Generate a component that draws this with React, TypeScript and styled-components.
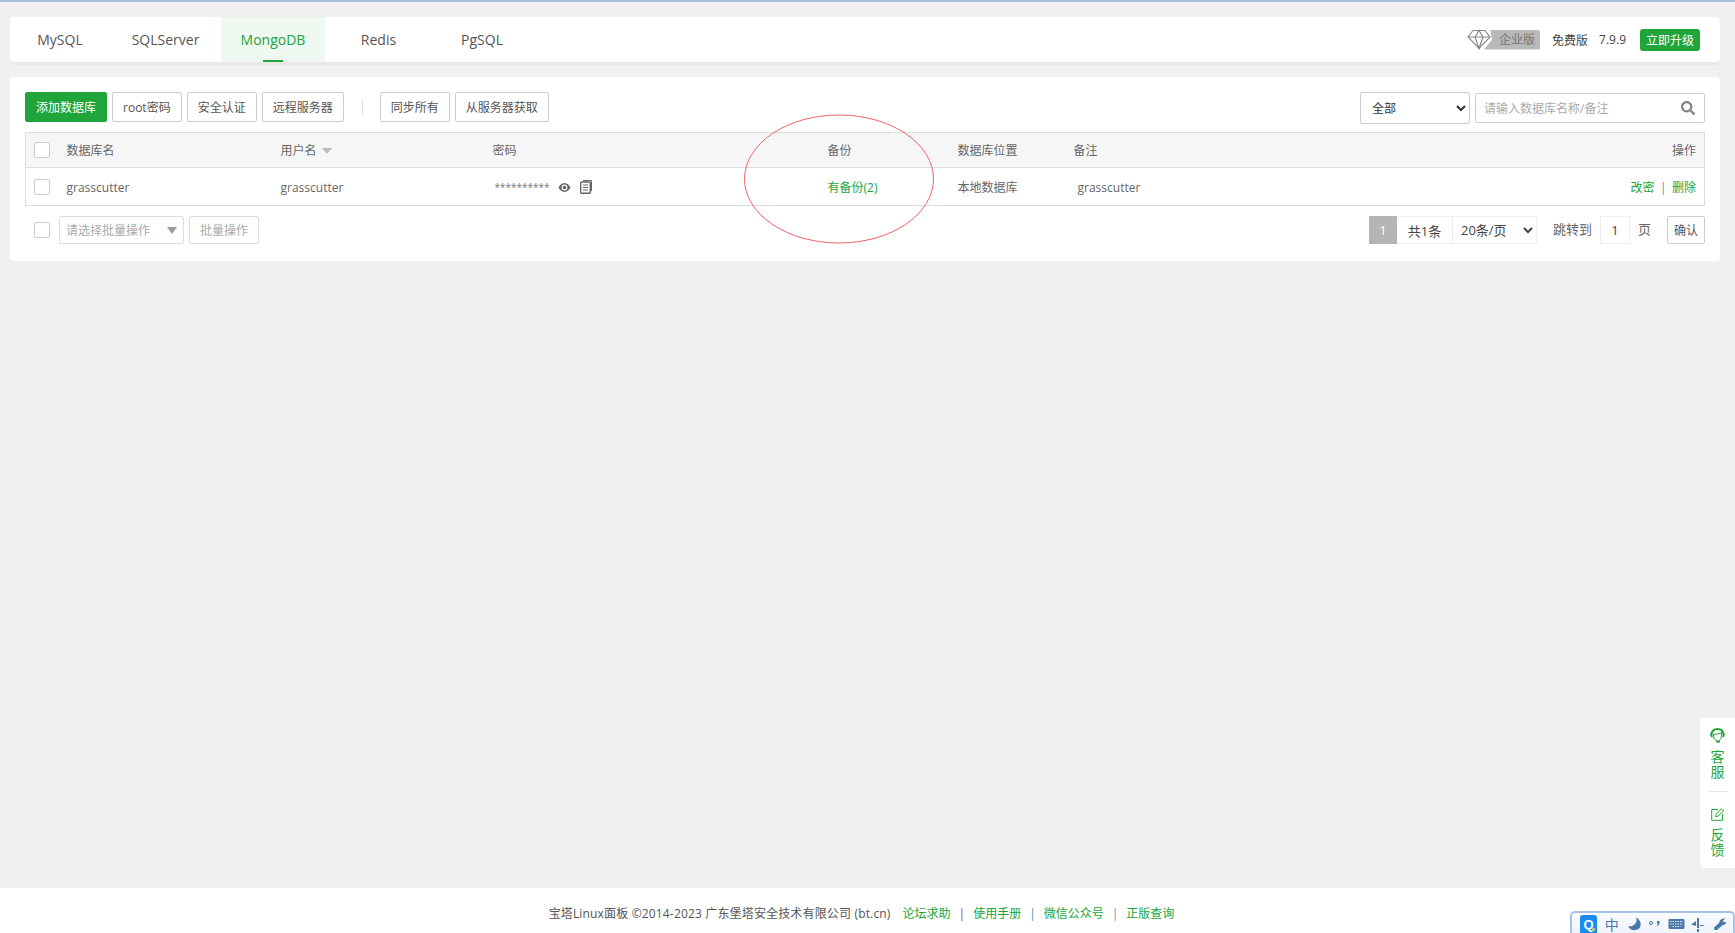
import styled, { createGlobalStyle } from 'styled-components'
import { FaSearch } from 'react-icons/fa'

const green = '#20a53a'
const font = `"Open Sans", "Noto Sans CJK SC", sans-serif`

const GlobalStyle = createGlobalStyle`
  html, body { margin: 0; padding: 0; height: 100%; }
  body { font-family: ${font}; font-size: 12px; color: #666; background: #f0f0f0; overflow: hidden; }
  #root { height: 100%; }
  * { box-sizing: border-box; }
`

const Page = styled.div`
  position: relative;
  display: flex;
  flex-direction: column;
  height: 933px;
  border-top: 2px solid #a9bfe2;
`

const Main = styled.main`
  flex: 1;
  padding: 15px 15px 0 10px;
`

const TopBar = styled.div`
  display: flex;
  align-items: center;
  justify-content: space-between;
  height: 45px;
  padding-right: 20px;
  background: #fff;
  border-radius: 4px;
  box-shadow: 0 3px 0 #e8e8e8;
`

const TabList = styled.div`
  display: flex;
  height: 100%;
`

const Tab = styled.div<{ $active?: boolean; $w: number }>`
  position: relative;
  display: flex;
  align-items: center;
  justify-content: center;
  width: ${(p) => p.$w}px;
  font-size: 14px;
  color: ${(p) => (p.$active ? green : '#555')};
  background: ${(p) => (p.$active ? '#eff8f1' : 'transparent')};
  &::after {
    content: '';
    display: ${(p) => (p.$active ? 'block' : 'none')};
    position: absolute;
    left: 50%;
    bottom: 0;
    width: 20px;
    height: 2px;
    margin-left: -10px;
    background: ${green};
  }
`

const VersionBox = styled.div`
  display: flex;
  align-items: center;
  color: #444;
`

const EnterpriseBadge = styled.div`
  display: flex;
  align-items: center;
  margin-right: 12px;
`

const BadgeLabel = styled.span`
  width: 56px;
  height: 20px;
  margin-left: -7px;
  padding-left: 15px;
  line-height: 20px;
  font-size: 12px;
  color: #757575;
  background: #b9b9b9;
  border-radius: 0 2px 2px 0;
  clip-path: polygon(6px 0, 100% 0, 100% 100%, 0 100%, 8px 50%);
`

const VersionText = styled.span<{ $gap?: number }>`
  margin-right: ${(p) => p.$gap ?? 0}px;
  font-size: 12px;
`

const UpgradeButton = styled.button`
  width: 60px;
  height: 22px;
  padding: 0;
  border: 0;
  border-radius: 3px;
  font: 12px ${font};
  color: #fff;
  background: ${green};
`

const Panel = styled.section`
  position: relative;
  margin-top: 15px;
  padding: 15px 15px 17px;
  background: #fff;
  border-radius: 4px;
`

const Toolbar = styled.div`
  display: flex;
  align-items: flex-start;
  height: 40px;
`

const Button = styled.button<{ $primary?: boolean; $muted?: boolean }>`
  height: 30px;
  margin-right: 5px;
  padding: 0 10px;
  font: 12px ${font};
  color: ${(p) => (p.$primary ? '#fff' : p.$muted ? '#aaa' : '#555')};
  background: ${(p) => (p.$primary ? green : '#fff')};
  border: 1px solid ${(p) => (p.$primary ? green : p.$muted ? '#ddd' : '#ccc')};
  border-radius: 2px;
  white-space: nowrap;
`

const ToolbarDivider = styled.span`
  width: 1px;
  height: 16px;
  margin: 7px 17px 0 13px;
  background: #ddd;
`

const SearchGroup = styled.div`
  display: flex;
  align-items: flex-start;
  margin-left: auto;
`

const TypeSelect = styled.select`
  width: 110px;
  height: 32px;
  margin-right: 5px;
  padding-left: 7px;
  font: 12px ${font};
  color: #333;
  background: #fff;
  border: 1px solid #ccc;
  border-radius: 2px;
`

const SearchBox = styled.div`
  display: flex;
  align-items: center;
  justify-content: space-between;
  width: 230px;
  height: 30px;
  margin-top: 1px;
  padding: 0 9px 0 8px;
  font-size: 12px;
  color: #aaa;
  border: 1px solid #ccc;
  border-radius: 2px;
  svg { width: 14px; height: 14px; color: #848484; }
`

const Table = styled.table`
  width: 100%;
  table-layout: fixed;
  border-collapse: collapse;
  border: 1px solid #ddd;
`

const Col = styled.col<{ $w?: number }>`
  width: ${(p) => (p.$w ? `${p.$w}px` : 'auto')};
`

const HeadCell = styled.th<{ $right?: boolean }>`
  height: 35px;
  padding: 0 ${(p) => (p.$right ? '8px' : '0')} 0 0;
  font-size: 12px;
  font-weight: 400;
  text-align: ${(p) => (p.$right ? 'right' : 'left')};
  color: #666;
  background: #f6f6f6;
  border-bottom: 1px solid #ddd;
`

const Cell = styled.td<{ $right?: boolean; $inset?: number; $green?: boolean }>`
  height: 38px;
  padding: 1px ${(p) => (p.$right ? '8px' : '0')} 0 ${(p) => p.$inset ?? 0}px;
  font-size: 12px;
  text-align: ${(p) => (p.$right ? 'right' : 'left')};
  color: ${(p) => (p.$green ? green : '#666')};
`

const Check = styled.span`
  display: block;
  width: 16px;
  height: 16px;
  margin-left: 8px;
  background: #fff;
  border: 1px solid #ccc;
  border-radius: 2px;
`

const SortArrow = styled.i`
  display: inline-block;
  margin-left: 5px;
  vertical-align: 1px;
  border-style: solid;
  border-width: 6px 5.5px 0;
  border-color: #bbb transparent transparent;
`

const PasswordCell = styled.div`
  display: flex;
  align-items: center;
  padding-left: 2px;
`

const Stars = styled.span`
  width: 63px;
  line-height: 12px;
  font-size: 10px;
  color: #777;
`

const IconGap = styled.svg`
  display: block;
  margin-right: 9px;
  color: #666;
`

const ActionLink = styled.a`
  color: ${green};
  text-decoration: none;
`

const ActionSep = styled.span`
  margin: 0 5.5px;
  color: #888;
`

const BottomRow = styled.div`
  display: flex;
  align-items: center;
  height: 28px;
  margin-top: 10px;
  padding-left: 1px;
`

const BatchCheck = styled(Check)`
  margin-right: 9px;
`

const BatchSelect = styled.div`
  display: flex;
  align-items: center;
  justify-content: space-between;
  width: 125px;
  height: 28px;
  margin-right: 5px;
  padding: 0 6px;
  color: #aaa;
  border: 1px solid #ddd;
  border-radius: 2px;
  &::after {
    content: '';
    border-style: solid;
    border-width: 7px 5.5px 0;
    border-color: #999 transparent transparent;
  }
`

const BatchButton = styled(Button)`
  height: 28px;
  margin: 0;
`

const Pager = styled.div`
  display: flex;
  align-items: center;
  height: 28px;
  margin-left: auto;
  font-size: 13px;
`

const PageItem = styled.span<{ $current?: boolean; $w: number }>`
  display: flex;
  align-items: center;
  justify-content: center;
  width: ${(p) => p.$w}px;
  height: 28px;
  color: ${(p) => (p.$current ? '#fff' : '#444')};
  background: ${(p) => (p.$current ? '#b5b5b5' : '#fff')};
  border: 1px solid ${(p) => (p.$current ? '#b5b5b5' : '#eee')};
  border-left-width: ${(p) => (p.$current ? 1 : 0)}px;
`

const PageSelect = styled.select`
  width: 84px;
  height: 28px;
  padding-left: 4px;
  font: 13px ${font};
  color: #444;
  background: #fff;
  border: 1px solid #eee;
  border-left: 0;
  border-radius: 0;
`

const PageLabel = styled.span<{ $l: number; $r: number }>`
  margin: 0 ${(p) => p.$r}px 3px ${(p) => p.$l}px;
  color: #666;
`

const PageInput = styled.span`
  display: flex;
  align-items: center;
  justify-content: center;
  width: 30px;
  height: 28px;
  color: #444;
  border: 1px solid #eee;
`

const ConfirmButton = styled(Button)`
  width: 38px;
  height: 28px;
  margin: 0;
  padding: 0;
  color: #555;
`

const Circle = styled.svg`
  position: absolute;
  left: 733px;
  top: 37px;
  pointer-events: none;
`

const Footer = styled.footer`
  display: flex;
  align-items: center;
  justify-content: center;
  height: 45px;
  padding: 5px 12px 0 0;
  font-size: 12px;
  color: #555;
  background: #fff;
`

const FooterLink = styled.a`
  color: ${green};
  text-decoration: none;
`

const FooterSep = styled.span<{ $c: string }>`
  margin: 0 8px;
  color: ${(p) => p.$c};
`

const Copyright = styled.span`
  margin-right: 12px;
  letter-spacing: 0.16px;
`

const SideDock = styled.aside`
  position: absolute;
  right: 0;
  top: 716px;
  width: 35px;
  height: 150px;
  padding-top: 10px;
  text-align: center;
  font-size: 14px;
  line-height: 15px;
  color: ${green};
  background: #fff;
  border-radius: 5px 0 0 5px;
`

const DockIcon = styled.svg`
  display: block;
  margin: 0 auto 6px;
`

const DockLabel = styled.div`
  width: 14px;
  margin: 0 auto;
`

const DockDivider = styled.div`
  width: 18px;
  height: 1px;
  margin: 12px auto 16px;
  background: #e4e4e4;
`

const ImeBar = styled.div`
  position: absolute;
  right: 0;
  bottom: 0;
  display: flex;
  align-items: flex-end;
  width: 165px;
  height: 22px;
  padding-left: 8px;
  color: #4a78a8;
  background: linear-gradient(#fafcff, #eef4fb);
  border: 2px solid #a7c4e8;
  border-bottom: 0;
  border-radius: 5px 5px 0 0;
`

const ImeLogo = styled.span`
  position: relative;
  display: flex;
  align-items: center;
  justify-content: center;
  width: 17px;
  height: 18px;
  margin-right: 4px;
  font: 700 13px "Liberation Sans", sans-serif;
  color: #fff;
  background: #1a8cf0;
  border-radius: 3px 3px 0 0;
  &::after {
    content: '';
    position: absolute;
    right: 2px;
    bottom: 2px;
    width: 3px;
    height: 3px;
    background: #e6e23c;
    border-radius: 50%;
  }
`

const ImeGlyph = styled.span`
  width: 21.5px;
  height: 17px;
  text-align: center;
  font-size: 14px;
  line-height: 17px;
  color: #4a78a8;
`

const ImeIcon = styled.svg`
  display: block;
  width: 21.5px;
  height: 17px;
  color: #4a78a8;
`

const tabs = [
  { name: 'MySQL', w: 100 },
  { name: 'SQLServer', w: 111 },
  { name: 'MongoDB', w: 104 },
  { name: 'Redis', w: 107 },
  { name: 'PgSQL', w: 100 },
]

const EyeIcon = () => (
  <IconGap width="13" height="11" viewBox="0 0 13 11">
    <path fill="currentColor" fillRule="evenodd" d="M6.5 1C3.6 1 1.4 3.4.5 5.500c.9 2.100 3.100 4.500 6 4.500s5.100-2.400 6-4.500C11.600 3.400 9.400 1 6.500 1zm0 1.600a2.900 2.900 0 1 1 0 5.800 2.900 2.900 0 0 1 0-5.800z" />
    <circle cx="6.500" cy="5.500" r="1.800" fill="currentColor" />
  </IconGap>
)

const CopyIcon = () => (
  <IconGap width="12" height="14" viewBox="0 0 12 14">
    <path fill="currentColor" d="M3 0h8a1 1 0 0 1 1 1v10h-1V1H3z" />
    <rect x="0.700" y="2" width="9.600" height="11.300" rx="1" fill="none" stroke="currentColor" strokeWidth="1.400" />
    <path stroke="currentColor" strokeWidth="1" d="M3 5h5M3 7.500h5M3 10h5" />
  </IconGap>
)

const DiamondIcon = () => (
  <svg width="24" height="21" viewBox="0 0 24 21" fill="none" stroke="#8a8a8a" strokeWidth="1.200" style={{ position: 'relative', zIndex: 1 }}>
    <path d="M6 1.500h12l5 6.500L12 19.500 1 8z" fill="#fff" />
    <path d="M1 8h22M8 8l4 11.500L16 8M8 8l4-6.500L16 8" />
  </svg>
)

const App = () => (
  <Page>
    <GlobalStyle />
    <Main>
      <TopBar>
        <TabList>
          {tabs.map((tab) => (
            <Tab key={tab.name} $w={tab.w} $active={tab.name === 'MongoDB'}>
              {tab.name}
            </Tab>
          ))}
        </TabList>
        <VersionBox>
          <EnterpriseBadge>
            <DiamondIcon />
            <BadgeLabel>企业版</BadgeLabel>
          </EnterpriseBadge>
          <VersionText $gap={11}>免费版</VersionText>
          <VersionText $gap={14}>7.9.9</VersionText>
          <UpgradeButton>立即升级</UpgradeButton>
        </VersionBox>
      </TopBar>

      <Panel>
        <Toolbar>
          <Button $primary>添加数据库</Button>
          <Button>root密码</Button>
          <Button>安全认证</Button>
          <Button>远程服务器</Button>
          <ToolbarDivider />
          <Button>同步所有</Button>
          <Button>从服务器获取</Button>
          <SearchGroup>
            <TypeSelect defaultValue="all">
              <option value="all">全部</option>
            </TypeSelect>
            <SearchBox>
              请输入数据库名称/备注
              <FaSearch />
            </SearchBox>
          </SearchGroup>
        </Toolbar>

        <Table>
          <colgroup>
            <Col $w={41} />
            <Col $w={214} />
            <Col $w={212} />
            <Col $w={335} />
            <Col $w={130} />
            <Col $w={116} />
            <Col />
          </colgroup>
          <thead>
            <tr>
              <HeadCell><Check /></HeadCell>
              <HeadCell>数据库名</HeadCell>
              <HeadCell>用户名<SortArrow /></HeadCell>
              <HeadCell>密码</HeadCell>
              <HeadCell>备份</HeadCell>
              <HeadCell>数据库位置</HeadCell>
              <HeadCell>备注</HeadCell>
              <HeadCell $right>操作</HeadCell>
            </tr>
          </thead>
          <tbody>
            <tr>
              <Cell><Check /></Cell>
              <Cell>grasscutter</Cell>
              <Cell>grasscutter</Cell>
              <Cell>
                <PasswordCell>
                  <Stars>**********</Stars>
                  <EyeIcon />
                  <CopyIcon />
                </PasswordCell>
              </Cell>
              <Cell $green>有备份(2)</Cell>
              <Cell>本地数据库</Cell>
              <Cell $inset={4}>grasscutter</Cell>
              <Cell $right>
                <ActionLink>改密</ActionLink>
                <ActionSep>|</ActionSep>
                <ActionLink>删除</ActionLink>
              </Cell>
            </tr>
          </tbody>
        </Table>

        <BottomRow>
          <BatchCheck />
          <BatchSelect>请选择批量操作</BatchSelect>
          <BatchButton $muted>批量操作</BatchButton>
          <Pager>
            <PageItem $current $w={28}>1</PageItem>
            <PageItem $w={56}>共1条</PageItem>
            <PageSelect defaultValue="20">
              <option value="20">20条/页</option>
            </PageSelect>
            <PageLabel $l={16} $r={8}>跳转到</PageLabel>
            <PageInput>1</PageInput>
            <PageLabel $l={8} $r={16}>页</PageLabel>
            <ConfirmButton>确认</ConfirmButton>
          </Pager>
        </BottomRow>

        <Circle width="192" height="130" viewBox="0 0 192 130" fill="none">
          <ellipse cx="96" cy="65" rx="94.500" ry="64" stroke="#f0626a" strokeWidth="1" />
        </Circle>
      </Panel>
    </Main>

    <Footer>
      <Copyright>宝塔Linux面板 ©2014-2023 广东堡塔安全技术有限公司 (bt.cn)</Copyright>
      <FooterLink>论坛求助</FooterLink>
      <FooterSep $c="#8a3a96">|</FooterSep>
      <FooterLink>使用手册</FooterLink>
      <FooterSep $c="#4a90c8">|</FooterSep>
      <FooterLink>微信公众号</FooterLink>
      <FooterSep $c="#6f8fa8">|</FooterSep>
      <FooterLink>正版查询</FooterLink>
    </Footer>

    <SideDock>
      <DockIcon width="15" height="15" viewBox="0 0 15 15">
        <path fill="currentColor" d="M7.500 0C3.500 0 .6 2.800.3 6.300.1 8 .9 9.500 2.500 9.800V6.500c0-2.800 2.200-4.600 5-4.600s5 1.800 5 4.600v3.300c1.600-.3 2.400-1.800 2.200-3.500C14.400 2.800 11.500 0 7.500 0z" />
        <path fill="none" stroke="currentColor" strokeWidth="1" d="M3.500 6c2 .5 5.500 0 8-1.300v3c0 3-2 5.300-4 5.300S3.500 10.700 3.500 8z" />
        <path fill="currentColor" d="M6 13h4v1.500H6z" />
      </DockIcon>
      <DockLabel>客服</DockLabel>
      <DockDivider />
      <DockIcon width="13" height="13" viewBox="0 0 13 13" fill="none" stroke="currentColor" strokeWidth="1">
        <path d="M7 1.500H.7v10.800h10.800V6" />
        <path d="M4.500 8.700l.5-2.500L10.500.8l2 2-5.500 5.400z" />
      </DockIcon>
      <DockLabel>反馈</DockLabel>
    </SideDock>

    <ImeBar>
      <ImeLogo>Q</ImeLogo>
      <ImeGlyph>中</ImeGlyph>
      <ImeIcon viewBox="0 0 21.500 17">
        <path fill="currentColor" d="M13 1.500c2 4.500-1.500 9.500-8 9 2 3.500 7 4.800 10.500 2.500S18.500 4 13 1.500z" />
      </ImeIcon>
      <ImeIcon viewBox="0 0 21.500 17">
        <circle cx="7" cy="7" r="1.500" fill="none" stroke="currentColor" />
        <path fill="currentColor" d="M13 5h2.500v2.500L14 10h-1l1-2.500h-1z" />
      </ImeIcon>
      <ImeIcon viewBox="0 0 21.500 17">
        <rect x="2.500" y="3" width="16" height="10" rx="1" fill="currentColor" />
        <path stroke="#e8f0fa" strokeWidth="1" strokeDasharray="1.500 1" d="M4 5.500h13M4 8h13M6.500 10.500h8" />
      </ImeIcon>
      <ImeIcon viewBox="0 0 21.500 17">
        <path fill="currentColor" d="M10 2h2v10h-2zM9 5v5L4 8.500zM13 9h3.500v1H13zM10 13h2v3h-2z" />
      </ImeIcon>
      <ImeIcon viewBox="0 0 21.500 17">
        <path fill="currentColor" d="M16.500 2.500l-2.500 2 .8 1.700 2-.5c.5 1.800-.8 3.500-3 3.300L8 14H5.500L5 11.500l5.500-5c-.3-2.500 2.500-4.500 6-4z" />
      </ImeIcon>
    </ImeBar>
  </Page>
)

export default App
